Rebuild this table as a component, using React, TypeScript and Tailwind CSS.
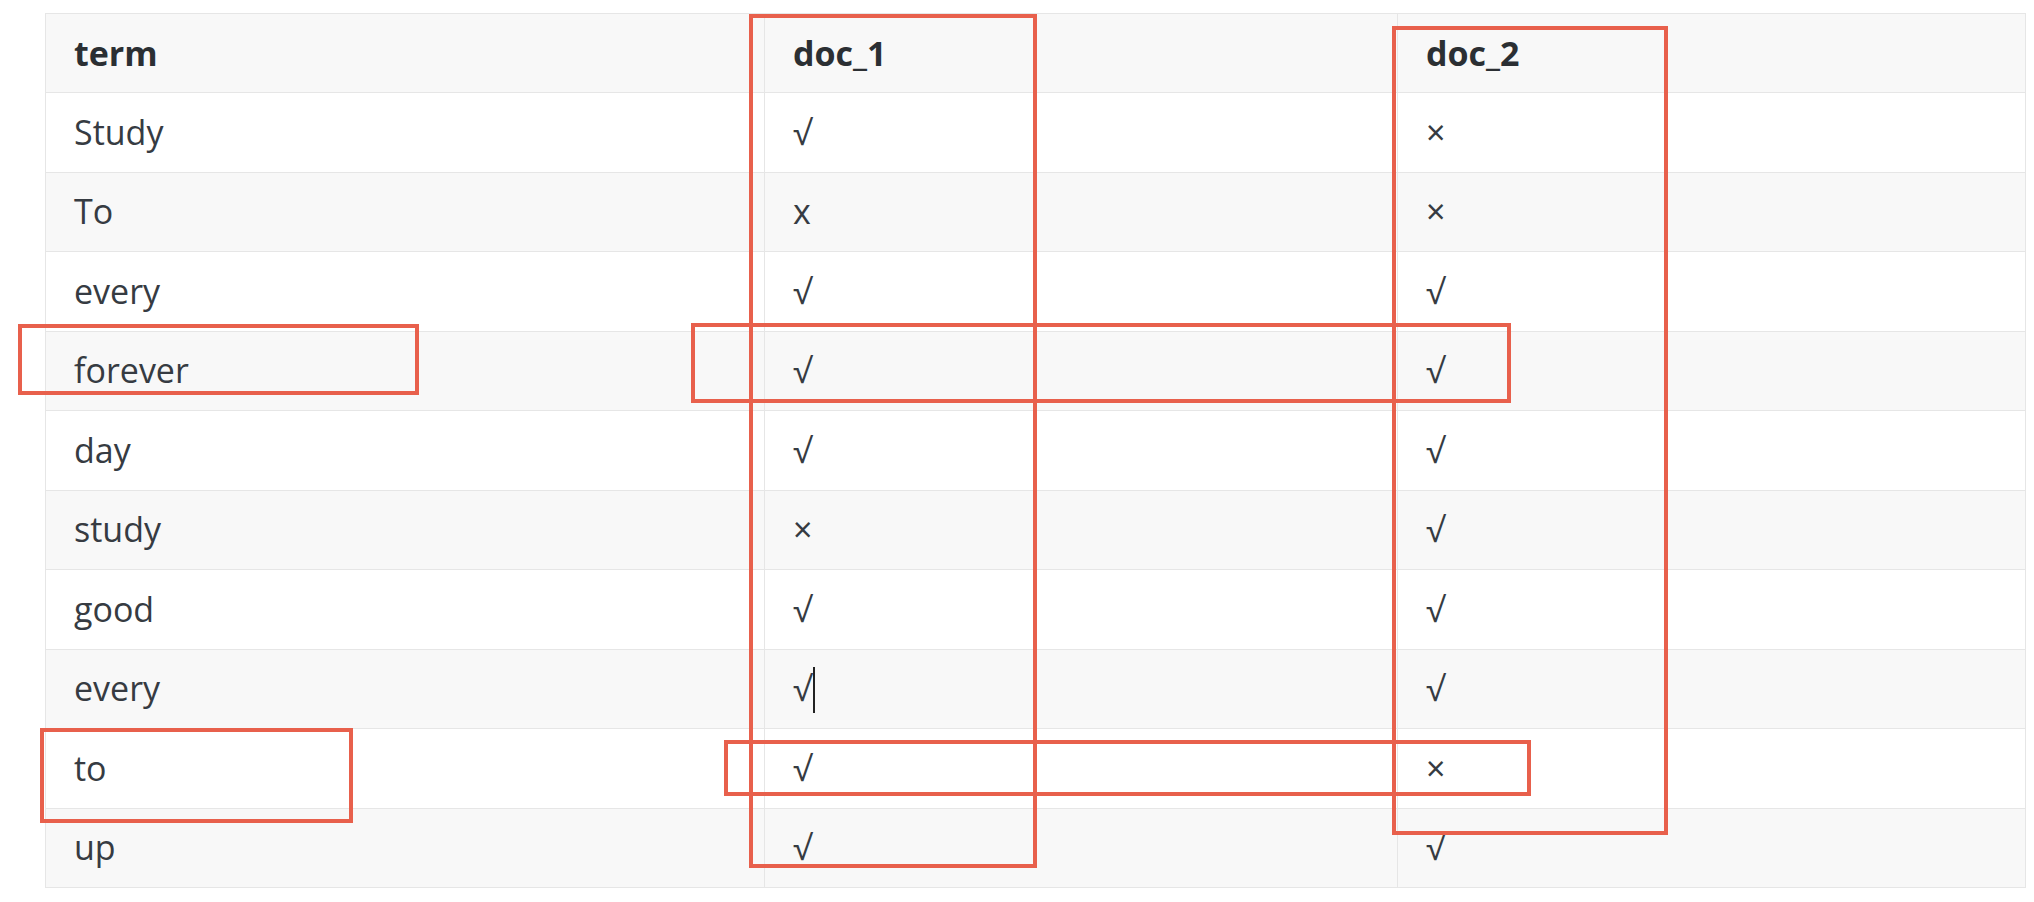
const rows: [string, string, string][] = [
  ["Study", "√", "×"],
  ["To", "x", "×"],
  ["every", "√", "√"],
  ["forever", "√", "√"],
  ["day", "√", "√"],
  ["study", "×", "√"],
  ["good", "√", "√"],
  ["every", "√|", "√"],
  ["to", "√", "×"],
  ["up", "√", "√"],
];

// red annotation boxes drawn over the table: [left, top, width, height]
const marks: [number, number, number, number][] = [
  [749, 14, 288, 854],
  [1392, 26, 276, 809],
  [18, 324, 401, 71],
  [691, 323, 820, 80],
  [40, 728, 313, 95],
  [724, 740, 807, 56],
];

function Cell({ text, first, bold }: { text: string; first?: boolean; bold?: boolean }) {
  const cursor = text.endsWith("|");
  const value = cursor ? text.slice(0, -1) : text;
  return (
    <div
      className={`flex items-center px-[28px] ${first ? "" : "border-l border-[#e6e6e6]"} ${
        bold ? "font-bold text-[#2b2f33]" : "text-[#363b42]"
      }`}
    >
      <span>{value}</span>
      {cursor && <span className="inline-block w-[2px] h-[46px] bg-[#222] ml-[1px] mt-[2px]" />}
    </div>
  );
}

export default function App() {
  return (
    <div className="relative w-[2034px] h-[902px] bg-white overflow-hidden pt-[13px] pl-[45px] font-['Open_Sans','DejaVu_Sans',sans-serif] text-[34px] leading-[1.5]">
      <div className="w-[1981px] border border-[#e6e6e6]">
        <div className="grid grid-cols-[718px_633px_1fr] h-[78px] bg-[#f8f8f8]">
          <Cell text="term" first bold />
          <Cell text="doc_1" bold />
          <Cell text="doc_2" bold />
        </div>
        {rows.map((r, i) => (
          <div
            key={i}
            className={`grid grid-cols-[718px_633px_1fr] h-[79.5px] border-t border-[#e6e6e6] ${
              i % 2 === 1 ? "bg-[#f8f8f8]" : "bg-white"
            }`}
          >
            <Cell text={r[0]} first />
            <Cell text={r[1]} />
            <Cell text={r[2]} />
          </div>
        ))}
      </div>

      {marks.map(([l, t, w, h], i) => (
        <div
          key={i}
          className="absolute border-[4px] border-[#e8604c] pointer-events-none"
          style={{ left: l, top: t, width: w, height: h }}
        />
      ))}
    </div>
  );
}
